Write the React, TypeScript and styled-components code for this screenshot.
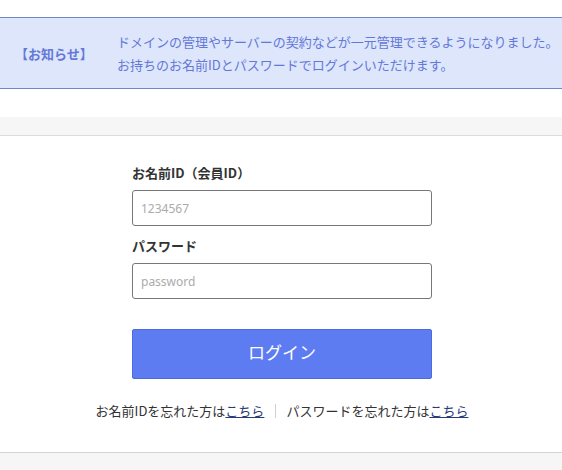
import React from "react";
import styled, { createGlobalStyle } from "styled-components";

const Global = createGlobalStyle`
  html, body { margin: 0; padding: 0; background: #fff; }
  body {
    font-family: "Noto Sans CJK JP", "Noto Sans", sans-serif;
    color: #333;
  }
  * { box-sizing: border-box; }
`;

const Page = styled.div`
  padding-top: 17px;
  background: #fff;
  min-height: 470px;
  display: flex;
  flex-direction: column;
`;

const Notice = styled.div`
  display: flex;
  align-items: center;
  height: 72px;
  background: #dde6fb;
  border-top: 1px solid #7088c8;
  border-bottom: 1px solid #7088c8;
  color: #6478d8;
  font-size: 13px;
`;

const NoticeLabel = styled.div`
  width: 117px;
  padding-left: 15px;
  font-weight: bold;
  line-height: 23px;
`;

const NoticeMessage = styled.div`
  line-height: 23px;
  white-space: nowrap;
`;

const Spacer = styled.div`
  height: 28px;
`;

const GreyBand = styled.div`
  height: 19px;
  background: #f6f6f6;
  border-bottom: 1px solid #dcdcdc;
`;

const Panel = styled.div`
  background: #fff;
  padding: 27px 0 31px 2px;
  border-bottom: 1px solid #d4d4d4;
`;

const Form = styled.form`
  width: 300px;
  margin: 0 auto;
  display: flex;
  flex-direction: column;
`;

const Label = styled.label<{ $gapTop?: number }>`
  font-size: 13px;
  font-weight: bold;
  line-height: 20px;
  color: #333;
  margin-top: ${(p) => p.$gapTop ?? 0}px;
  margin-bottom: 7px;
`;

const Input = styled.input`
  width: 300px;
  height: 36px;
  border: 1px solid #777;
  border-radius: 3px;
  padding: 0 8px;
  font-family: "Noto Sans", sans-serif;
  font-size: 12px;
  color: #333;
  outline: none;
  &::placeholder { color: #ababab; }
`;

const Button = styled.button`
  margin-top: 30px;
  width: 300px;
  height: 50px;
  padding: 0 0 4px;
  background: #5d7cf2;
  border: 1px solid #4e6ae0;
  border-radius: 2px;
  color: #fff;
  font-family: "Noto Sans CJK JP", sans-serif;
  font-size: 17px;
  line-height: 20px;
  cursor: pointer;
`;

const Links = styled.div`
  margin-top: 22px;
  display: flex;
  justify-content: center;
  align-items: center;
  font-size: 13px;
  line-height: 20px;
  color: #333;
  white-space: nowrap;
`;

const Link = styled.a`
  color: #283a78;
  text-decoration: underline;
`;

const Separator = styled.span`
  display: inline-block;
  width: 1px;
  height: 14px;
  background: #d0d0d0;
  margin: 0 10px 0 11px;
`;

const Bottom = styled.div`
  flex: 1;
  background: #f6f6f6;
`;

export default function App() {
  return (
    <>
      <Global />
      <Page>
        <Notice>
          <NoticeLabel>【お知らせ】</NoticeLabel>
          <NoticeMessage>
            ドメインの管理やサーバーの契約などが一元管理できるようになりました。
            <br />
            お持ちのお名前IDとパスワードでログインいただけます。
          </NoticeMessage>
        </Notice>
        <Spacer />
        <GreyBand />
        <Panel>
          <Form onSubmit={(e) => e.preventDefault()}>
            <Label>お名前ID（会員ID）</Label>
            <Input type="text" placeholder="1234567" />
            <Label $gapTop={10}>パスワード</Label>
            <Input type="password" placeholder="password" />
            <Button type="submit">ログイン</Button>
          </Form>
          <Links>
            <span>
              お名前IDを忘れた方は<Link href="#">こちら</Link>
            </span>
            <Separator />
            <span>
              パスワードを忘れた方は<Link href="#">こちら</Link>
            </span>
          </Links>
        </Panel>
        <Bottom />
      </Page>
    </>
  );
}
